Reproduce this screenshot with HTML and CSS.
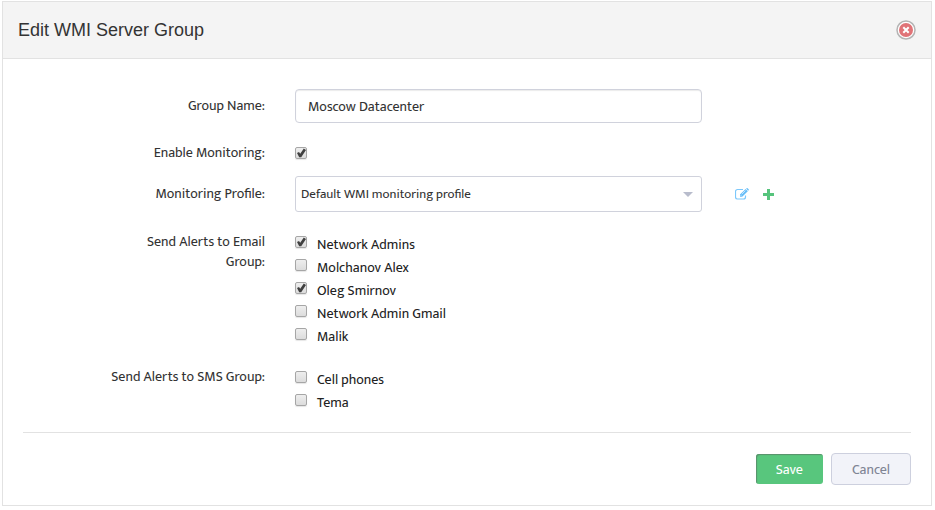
FILE: index.html
```
<!DOCTYPE html>
<html lang="en">
<head>
  <meta charset="UTF-8">
  <meta name="viewport" content="width=device-width, initial-scale=1">
  <title>Edit WMI Server Group</title>
  <link rel="stylesheet" href="styles.css">
</head>
<body>
  <div class="panel">
    <header class="panel-header">
      <h1>Edit WMI Server Group</h1>
      <button type="button" class="close-btn" aria-label="Close">
        <svg width="20" height="20" viewBox="0 0 20 20">
          <circle cx="10" cy="10" r="9" fill="#fff" stroke="#b4b4b4" stroke-width="1.5"/>
          <circle cx="10" cy="10" r="7" fill="#e07377"/>
          <path d="M7.3 7.3l5.400 5.400M12.700 7.300l-5.400 5.400" stroke="#fff" stroke-width="2"/>
        </svg>
      </button>
    </header>

    <form>
      <div class="fields">
        <div class="form-row">
          <label class="form-label" for="group-name">Group Name:</label>
          <input type="text" id="group-name" class="text-input" value="Moscow Datacenter">
        </div>

        <div class="form-row tight">
          <label class="form-label" for="enable">Enable Monitoring:</label>
          <div class="control"><input type="checkbox" id="enable" checked></div>
        </div>

        <div class="form-row">
          <label class="form-label" for="profile">Monitoring Profile:</label>
          <div class="select-wrap">
            <select id="profile">
              <option>Default WMI monitoring profile</option>
            </select>
          </div>
          <div class="row-actions">
            <a href="#" aria-label="Edit profile">
              <svg width="14" height="12" viewBox="0 0 14 12" fill="none">
                <path d="M8 1.5H2.5a2 2 0 0 0-2 2V9a2 2 0 0 0 2 2h6a2 2 0 0 0 2-2V7.5" stroke="#7cc8fb" stroke-width="1.2"/>
                <path d="M5 8.800V6.600L10.600 1l2.200 2.200-5.600 5.600z" fill="#66bdf8"/>
                <path d="M11.100.6l.5-.4q.5-.3 1 .1l1 1q.5.5 0 1l-.5.5z" fill="#66bdf8"/>
                <path d="M6.800 6.200l3.600-3.600M5.700 7.200l.9.9" stroke="#fff" stroke-width=".6"/>
              </svg>
            </a>
            <a href="#" aria-label="Add profile">
              <svg width="11" height="11" viewBox="0 0 11 11">
                <path d="M4 0h3v4h4v3H7v4H4V7H0V4h4z" fill="#56c47c"/>
              </svg>
            </a>
          </div>
        </div>

        <div class="form-row top" role="group" aria-labelledby="email-label">
          <div class="form-label" id="email-label">Send Alerts to Email Group:</div>
          <div class="check-list">
            <label><input type="checkbox" checked>Network Admins</label>
            <label><input type="checkbox">Molchanov Alex</label>
            <label><input type="checkbox" checked>Oleg Smirnov</label>
            <label><input type="checkbox">Network Admin Gmail</label>
            <label><input type="checkbox">Malik</label>
          </div>
        </div>

        <div class="form-row top" role="group" aria-labelledby="sms-label">
          <div class="form-label" id="sms-label">Send Alerts to SMS Group:</div>
          <div class="check-list">
            <label><input type="checkbox">Cell phones</label>
            <label><input type="checkbox">Tema</label>
          </div>
        </div>
      </div>

      <div class="form-actions">
        <button type="submit" class="btn btn-save">Save</button>
        <button type="button" class="btn btn-cancel">Cancel</button>
      </div>
    </form>
  </div>
</body>
</html>
```
FILE: styles.css
```
* {
  box-sizing: border-box;
}

body {
  margin: 0;
  padding: 1px 3px 4px 2px;
  font-family: "Ek Mukta", Mukta, "Noto Sans", sans-serif;
  font-size: 14px;
  line-height: 20px;
  color: #333;
  background: #fff;
}

.panel {
  border: 1px solid #e2e2e2;
}

.panel-header {
  display: flex;
  align-items: center;
  justify-content: space-between;
  height: 57px;
  padding: 0 15px;
  background: #f4f4f4;
  border-bottom: 1px solid #e2e2e2;
}

h1 {
  margin: 0;
  font-family: "Liberation Sans", Arial, sans-serif;
  font-size: 18px;
  font-weight: normal;
}

.close-btn {
  display: flex;
  padding: 0;
  border: none;
  background: none;
  cursor: pointer;
}

form {
  padding: 30px 20px 20px;
}

.form-row {
  display: grid;
  grid-template-columns: 242fr 407fr 179fr;
  column-gap: 30px;
  align-items: center;
  margin-bottom: 20px;
}

.form-row.tight {
  margin-bottom: 13px;
}

.form-row.top {
  align-items: start;
  margin-bottom: 19px;
}

.form-row:last-child {
  margin-bottom: 18px;
}

.form-label {
  padding-left: 84px;
  text-align: right;
}

.control {
  display: flex;
}

.text-input,
select {
  width: 100%;
  border: 1px solid #d0d2dc;
  border-radius: 4px;
  background: #fff;
  color: #333;
  font-family: inherit;
  font-size: 14px;
}

.text-input {
  height: 34px;
  padding: 0 12px;
  box-shadow: inset 0 1px 1px rgba(0, 0, 0, 0.08);
}

select {
  height: 36px;
  padding: 0 30px 0 5px;
  border-radius: 3px;
  font-size: 13px;
  appearance: none;
}

.select-wrap {
  position: relative;
}

.select-wrap::after {
  content: "";
  position: absolute;
  right: 9px;
  top: 16px;
  border: 5px solid transparent;
  border-top-color: #b8bccc;
  border-bottom: none;
  pointer-events: none;
}

.row-actions {
  display: flex;
  align-items: center;
  gap: 14px;
  padding-left: 3px;
}

.row-actions a {
  display: flex;
}

input[type="checkbox"] {
  width: 12px;
  height: 12px;
  margin: 0;
  border: 1px solid #a6a6a6;
  border-radius: 2px;
  background: linear-gradient(#eee, #dcdcdc);
  box-shadow: 0 1px 1px rgba(0, 0, 0, 0.1);
  appearance: none;
}

input[type="checkbox"]:checked::before {
  content: "";
  display: block;
  width: 10px;
  height: 10px;
  background: #404040;
  clip-path: polygon(10% 50%, 30% 40%, 42% 58%, 78% 5%, 100% 20%, 52% 92%, 32% 92%);
}

.check-list {
  padding-top: 1px;
}

.check-list label {
  display: flex;
  gap: 10px;
  width: max-content;
  line-height: 23px;
  color: #222;
}

.check-list input {
  margin-top: 3px;
}

.form-actions {
  display: flex;
  justify-content: flex-end;
  align-items: center;
  gap: 8px;
  padding-top: 20px;
  border-top: 1px solid #e2e2e2;
}

.btn {
  height: 32px;
  padding: 0 20px;
  border: 1px solid #cdd0de;
  border-radius: 4px;
  font-family: inherit;
  font-size: 14px;
  cursor: pointer;
}

.btn-save {
  height: 30px;
  border: none;
  border-radius: 3px;
  background: #58c67d;
  box-shadow: inset 1px 1px 1px 0 #5a8f6c;
  color: #fff;
}

.btn-cancel {
  background: #f2f3f9;
  color: #7f8494;
}
```
